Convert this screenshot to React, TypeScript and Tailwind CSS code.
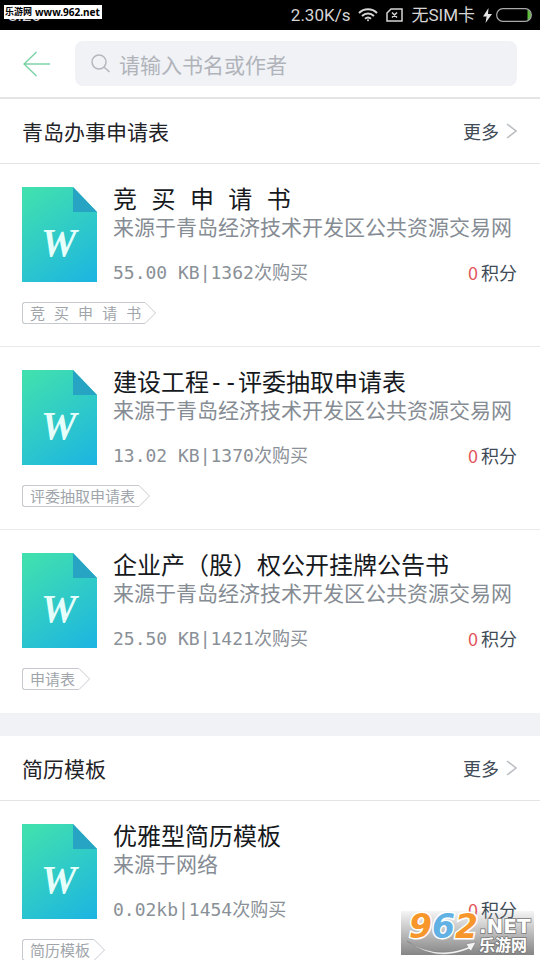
import React, { useId } from "react";

const FONT = "font-['Noto_Sans_CJK_SC',sans-serif]";

type Doc = {
  title: string;
  source: string;
  size: string;
  sold: number;
  tag: string;
};

type SectionData = { name: string; docs: Doc[] };

const QINGDAO = "来源于青岛经济技术开发区公共资源交易网";

const sections: SectionData[] = [
  {
    name: "青岛办事申请表",
    docs: [
      { title: "竞 买 申 请 书", source: QINGDAO, size: "55.00 KB", sold: 1362, tag: "竞 买 申 请 书" },
      { title: "建设工程--评委抽取申请表", source: QINGDAO, size: "13.02 KB", sold: 1370, tag: "评委抽取申请表" },
      { title: "企业产（股）权公开挂牌公告书", source: QINGDAO, size: "25.50 KB", sold: 1421, tag: "申请表" },
    ],
  },
  {
    name: "简历模板",
    docs: [
      { title: "优雅型简历模板", source: "来源于网络", size: "0.02kb", sold: 1454, tag: "简历模板" },
    ],
  },
];

/** Sets the Latin runs of a mixed string in a monospaced face. */
function Mixed({ text }: { text: string }) {
  return (
    <>
      {text.split(/([ -~]+)/).map((run, i) =>
        i % 2 === 1 ? (
          <span key={i} className="font-['DejaVu_Sans_Mono',monospace]">
            {run}
          </span>
        ) : (
          run
        ),
      )}
    </>
  );
}

function StatusBar() {
  return (
    <div className="relative flex h-[30px] shrink-0 items-center justify-between bg-black px-2 font-['Roboto','Noto_Sans_CJK_SC',sans-serif] text-[17px] leading-[30px] text-[#d6d6d6]">
      <span>8:26</span>
      <div className="flex items-center gap-2">
        <span>2.30K/s</span>
        <svg className="h-[14px] w-5" viewBox="0 0 20 14" fill="none" stroke="#d6d6d6" strokeWidth="2">
          <path d="M1 5C6 0 14 0 19 5M4 8c3.500-3.400 8.500-3.400 12 0M7 10.700c2-1.700 4-1.700 6 0" />
          <circle cx="10" cy="12.300" r="1" fill="#d6d6d6" stroke="none" />
        </svg>
        <svg className="h-[14px] w-[17px]" viewBox="0 0 17 14" fill="none" stroke="#d6d6d6" strokeWidth="1.500">
          <path d="M5 1h11v12H1V5zM6 4.500l5 5M11 4.500l-5 5" />
        </svg>
        <span>无SIM卡</span>
        <span className="flex items-center gap-1">
          <svg className="h-[15px] w-[9px]" viewBox="0 0 9 15" fill="#e4e4e4">
            <path d="M5.500 0L0 8.500h3.600L2.500 15 9 6H5z" />
          </svg>
          <svg className="h-[14px] w-9" viewBox="0 0 36 14">
            <path d="M31.500 1.500q3.500 2 3.500 5.500t-3.500 5.500z" fill="#5fbf3c" />
            <rect x="0.700" y="0.700" width="34.600" height="12.600" rx="6" fill="none" stroke="#a9a9a9" strokeWidth="1.200" />
          </svg>
        </span>
      </div>
      <div className="absolute left-1 top-[5px] flex h-[14px] w-[98px] items-center gap-[3px] whitespace-nowrap bg-white pl-px font-['Noto_Sans','Noto_Sans_CJK_SC',sans-serif] font-bold leading-[14px] text-black">
        <span className="text-[9px]">乐游网</span>
        <span className="text-[10px]">www.962.net</span>
      </div>
    </div>
  );
}

function SearchHeader() {
  return (
    <header className="flex h-[69px] shrink-0 items-center border-b-2 border-[#e3e4e6] pl-[23px] pr-[23px]">
      <button type="button" aria-label="返回" className="w-[52px]">
        <svg className="h-[26px] w-[27px]" viewBox="0 0 27 26" fill="none" stroke="#7dd3a8" strokeWidth="1.500">
          <path d="M13.500 1L1 13l12.500 12M1 13h26" />
        </svg>
      </button>
      <label className="flex h-[45px] min-w-0 flex-1 items-center gap-2 rounded-lg bg-[#f1f2f6] pl-4">
        <svg className="h-5 w-5 shrink-0" viewBox="0 0 20 20" fill="none" stroke="#b4b8be" strokeWidth="1.500">
          <circle cx="8" cy="8" r="7" />
          <path d="M13 13L18.500 18" />
        </svg>
        <input
          type="text"
          aria-label="搜索"
          placeholder="请输入书名或作者"
          className="min-w-0 flex-1 bg-transparent text-[21px] leading-[30px] text-[#1f2328] outline-none placeholder:text-[#b0b4ba]"
        />
      </label>
    </header>
  );
}

function WordIcon() {
  const id = useId();
  return (
    <svg className="h-[95px] w-[75px] shrink-0" viewBox="0 0 75 95">
      <defs>
        <linearGradient id={id} gradientUnits="userSpaceOnUse" x1="8" y1="5" x2="70" y2="98">
          <stop offset="0" stopColor="#40dfb0" />
          <stop offset="1" stopColor="#1cb4e2" />
        </linearGradient>
      </defs>
      <path d="M0 0h51l24 25v70H0z" fill={`url(#${id})`} />
      <path d="M51 0l24 25H51z" fill="#27a3c3" />
      <text x="19" y="69" fontSize="40" fill="#e6fffb" className="font-['Liberation_Serif',serif] font-bold italic">
        W
      </text>
    </svg>
  );
}

function Tag({ text }: { text: string }) {
  return (
    <div className="flex h-[22px]">
      <span className="whitespace-pre rounded-l-[3px] border-y border-l border-[#c6cacf] pl-[7px] pr-1 text-[15px] leading-5 text-[#a0a5ab]">
        <Mixed text={text} />
      </span>
      <svg className="h-[22px] w-[11px]" viewBox="0 0 11 22" fill="none" stroke="#c6cacf">
        <path d="M0 0.500L10.500 11 0 21.500" />
      </svg>
    </div>
  );
}

function DocRow({ doc }: { doc: Doc }) {
  return (
    <li className="border-b border-[#e8e9eb] pb-[22px] pl-[22px] pr-[23px] pt-5 last:border-transparent">
      <div className="flex items-center gap-4">
        <WordIcon />
        <div className="min-w-0 flex-1 pb-[2px]">
          <h3 className="h-7 whitespace-pre text-2xl leading-[28px] text-[#16191d]">
            <Mixed text={doc.title} />
          </h3>
          <p className="whitespace-nowrap text-[21px] leading-[28px] text-[#868c93]">{doc.source}</p>
          <div className="mt-[21px] flex h-[22px] items-center justify-between text-lg leading-[22px]">
            <span className="text-[#8a9097]">
              <Mixed text={`${doc.size}|${doc.sold}次购买`} />
            </span>
            <span className="flex gap-[3px] text-[#414b57]">
              <span className="text-[#e2555b]">0</span>
              <span>积分</span>
            </span>
          </div>
        </div>
      </div>
      <div className="mt-[17px]">
        <Tag text={doc.tag} />
      </div>
    </li>
  );
}

function Section({ data }: { data: SectionData }) {
  return (
    <section className="bg-white">
      <div className="flex h-[65px] items-center justify-between border-b border-[#e3e4e6] pl-[22px] pr-[23px]">
        <h2 className="text-[21px] leading-[30px] text-[#1f2328]">{data.name}</h2>
        <a href="#more" className="flex items-center gap-[7px] text-lg leading-[30px] text-[#414b57]">
          更多
          <svg className="h-4 w-[11px]" viewBox="0 0 11 16" fill="none" stroke="#b9bdc2" strokeWidth="1.500">
            <path d="M1 1l9 7-9 7" />
          </svg>
        </a>
      </div>
      <ul>
        {data.docs.map((doc) => (
          <DocRow key={doc.title} doc={doc} />
        ))}
      </ul>
    </section>
  );
}

function SiteBadge() {
  return (
    <div className="absolute bottom-[5px] right-[6px] h-[44px] w-[133px] bg-linear-to-b from-[#9a9a9a]/10 to-[#858585]">
      <svg className="h-full w-full overflow-visible" viewBox="0 0 133 44">
        <text
          x="8"
          y="27"
          fontSize="33"
          stroke="#ffffff"
          strokeWidth="3"
          paintOrder="stroke"
          className="font-['DejaVu_Sans',sans-serif] font-bold italic"
        >
          <tspan fill="#f7962a">9</tspan>
          <tspan fill="#62b1e4">6</tspan>
          <tspan fill="#f7962a">2</tspan>
        </text>
        <path d="M6 30Q35 49 67 36l-2-3 10-2-5 9-2-2Q35 52 6 30z" fill="#f4f4f4" stroke="#777777" strokeWidth="0.500" />
        <g fill="#ffffff" stroke="#777777" strokeWidth="1.500" paintOrder="stroke">
          <text x="78" y="22" fontSize="20" className="font-['DejaVu_Sans',sans-serif] font-bold">.NET</text>
          <text x="78" y="40" fontSize="16" className="font-['Noto_Sans_CJK_SC',sans-serif] font-bold">乐游网</text>
        </g>
      </svg>
    </div>
  );
}

export default function App() {
  return (
    <div className={`relative flex h-screen flex-col overflow-hidden bg-white ${FONT}`}>
      <StatusBar />
      <SearchHeader />
      <main className="flex min-h-0 flex-1 flex-col gap-[23px] overflow-hidden bg-[#f1f2f6]">
        {sections.map((s) => (
          <Section key={s.name} data={s} />
        ))}
      </main>
      <SiteBadge />
    </div>
  );
}
